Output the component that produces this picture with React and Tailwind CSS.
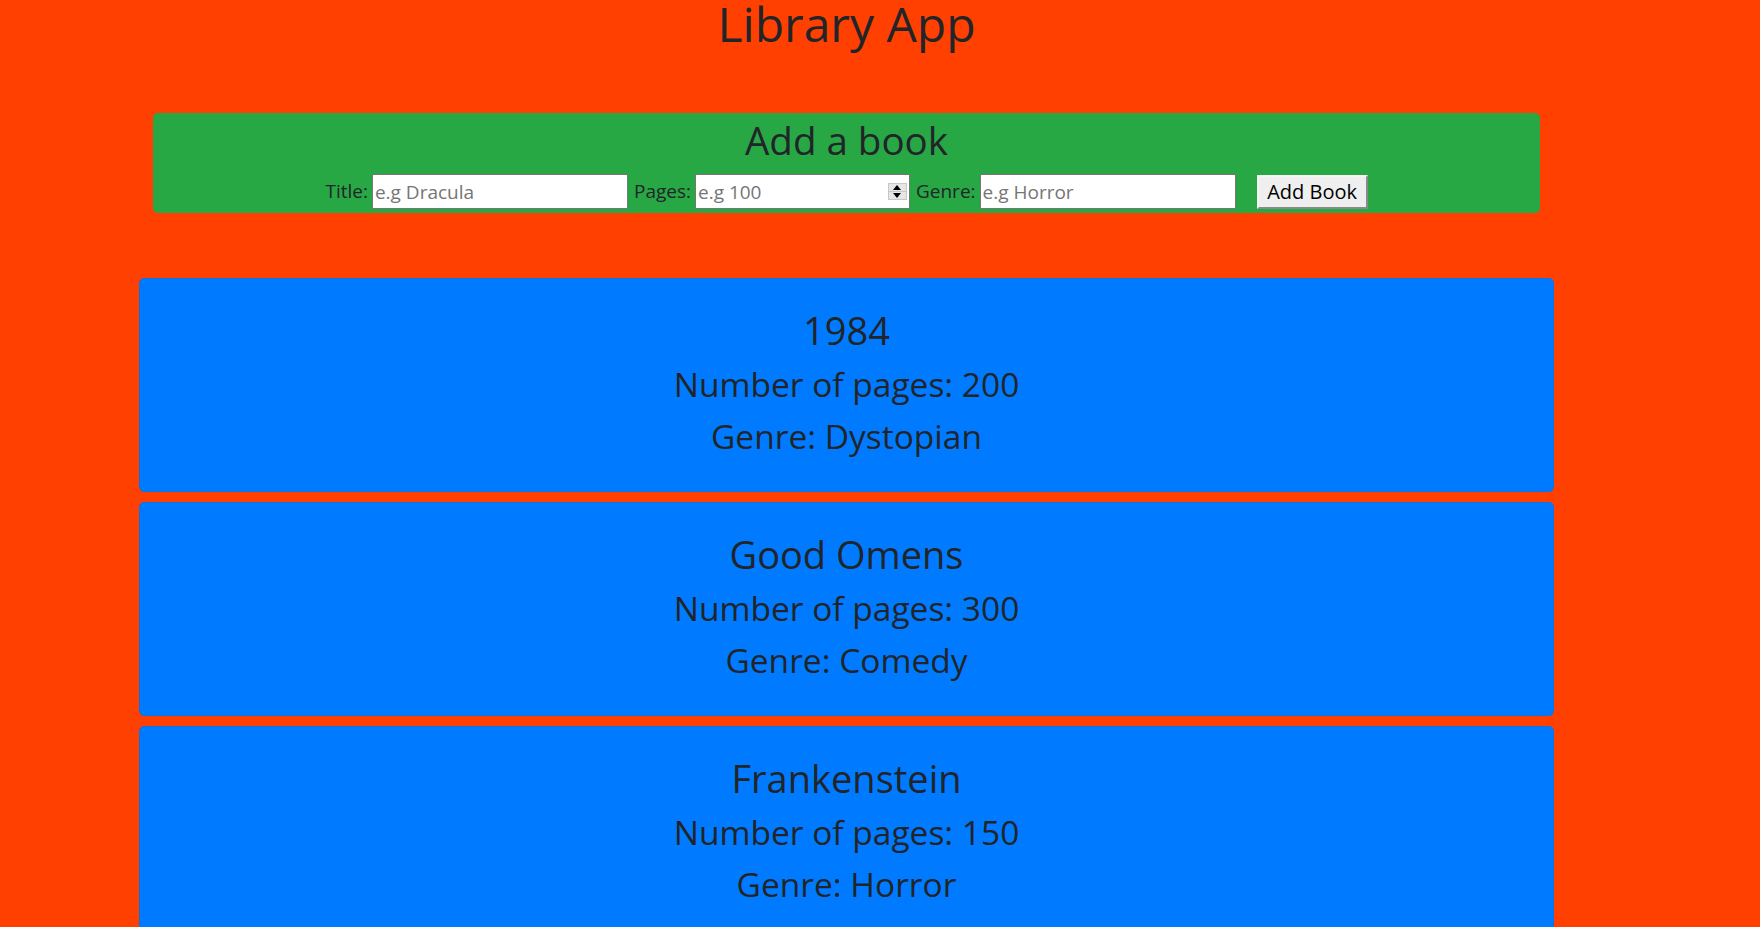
import React from "react";

const books = [
  { title: "1984", pages: 200, genre: "Dystopian" },
  { title: "Good Omens", pages: 300, genre: "Comedy" },
  { title: "Frankenstein", pages: 150, genre: "Horror" },
];

function Spinner() {
  return (
    <div className="flex flex-col w-[19px] h-[17px] border border-[#c8c8c8] bg-[#e6e6e6] mr-[2px]">
      <div className="flex-1 flex items-center justify-center border-b border-[#c8c8c8]">
        <div className="w-0 h-0 border-l-[4px] border-r-[4px] border-b-[5px] border-l-transparent border-r-transparent border-b-black" />
      </div>
      <div className="flex-1 flex items-center justify-center">
        <div className="w-0 h-0 border-l-[4px] border-r-[4px] border-t-[5px] border-l-transparent border-r-transparent border-t-black" />
      </div>
    </div>
  );
}

export default function App() {
  return (
    <div
      className="min-h-screen bg-[#ff4000] text-[#212529]"
      style={{ fontFamily: '"Open Sans", "Noto Sans", sans-serif' }}
    >
      <div className="w-[1693px] pb-10">
        <h1 className="m-0 text-center text-[48px] leading-[48px] font-normal">Library App</h1>

        <div className="mx-[153px] mt-[65px] h-[100px] rounded-[5px] bg-[#28a745] flex flex-col items-center">
          <h2 className="m-0 text-[38.5px] leading-[48px] font-normal mt-[3px]">Add a book</h2>
          <form className="flex items-center mt-[10px] text-[19px]" onSubmit={(e) => e.preventDefault()}>
            <label className="mr-[4px]">Title:</label>
            <input
              className="w-[256px] h-[35px] border border-[#767676] bg-white px-[2px] text-[19px] placeholder:text-[#757575] outline-none"
              placeholder="e.g Dracula"
            />
            <label className="ml-[6px] mr-[4px]">Pages:</label>
            <div className="w-[215px] h-[35px] border border-[#767676] bg-white flex items-center">
              <input
                className="flex-1 min-w-0 h-full px-[2px] text-[19px] placeholder:text-[#757575] outline-none"
                placeholder="e.g 100"
              />
              <Spinner />
            </div>
            <label className="ml-[6px] mr-[4px]">Genre:</label>
            <input
              className="w-[256px] h-[35px] border border-[#767676] bg-white px-[2px] text-[19px] placeholder:text-[#757575] outline-none"
              placeholder="e.g Horror"
            />
            <button
              type="submit"
              className="ml-[21px] w-[111px] h-[34px] bg-[#efefef] text-black text-[20px] border-2 border-t-[#f5f5f5] border-l-[#f5f5f5] border-r-[#8a8a8a] border-b-[#8a8a8a] leading-none"
            >
              Add Book
            </button>
          </form>
        </div>

        <div className="mt-[65px] mx-[139px] flex flex-col gap-[10px]">
          {books.map((b) => (
            <div
              key={b.title}
              className="h-[214px] rounded-[5px] bg-[#007bff] border border-[#0a74e6] flex flex-col items-center pt-[27px]"
            >
              <h2 className="m-0 text-[38px] leading-[48px] font-normal mb-[9px]">{b.title}</h2>
              <h3 className="m-0 text-[33.5px] leading-[42px] font-normal mb-[10px]">Number of pages: {b.pages}</h3>
              <h3 className="m-0 text-[33.5px] leading-[42px] font-normal">Genre: {b.genre}</h3>
            </div>
          ))}
        </div>
      </div>
    </div>
  );
}
